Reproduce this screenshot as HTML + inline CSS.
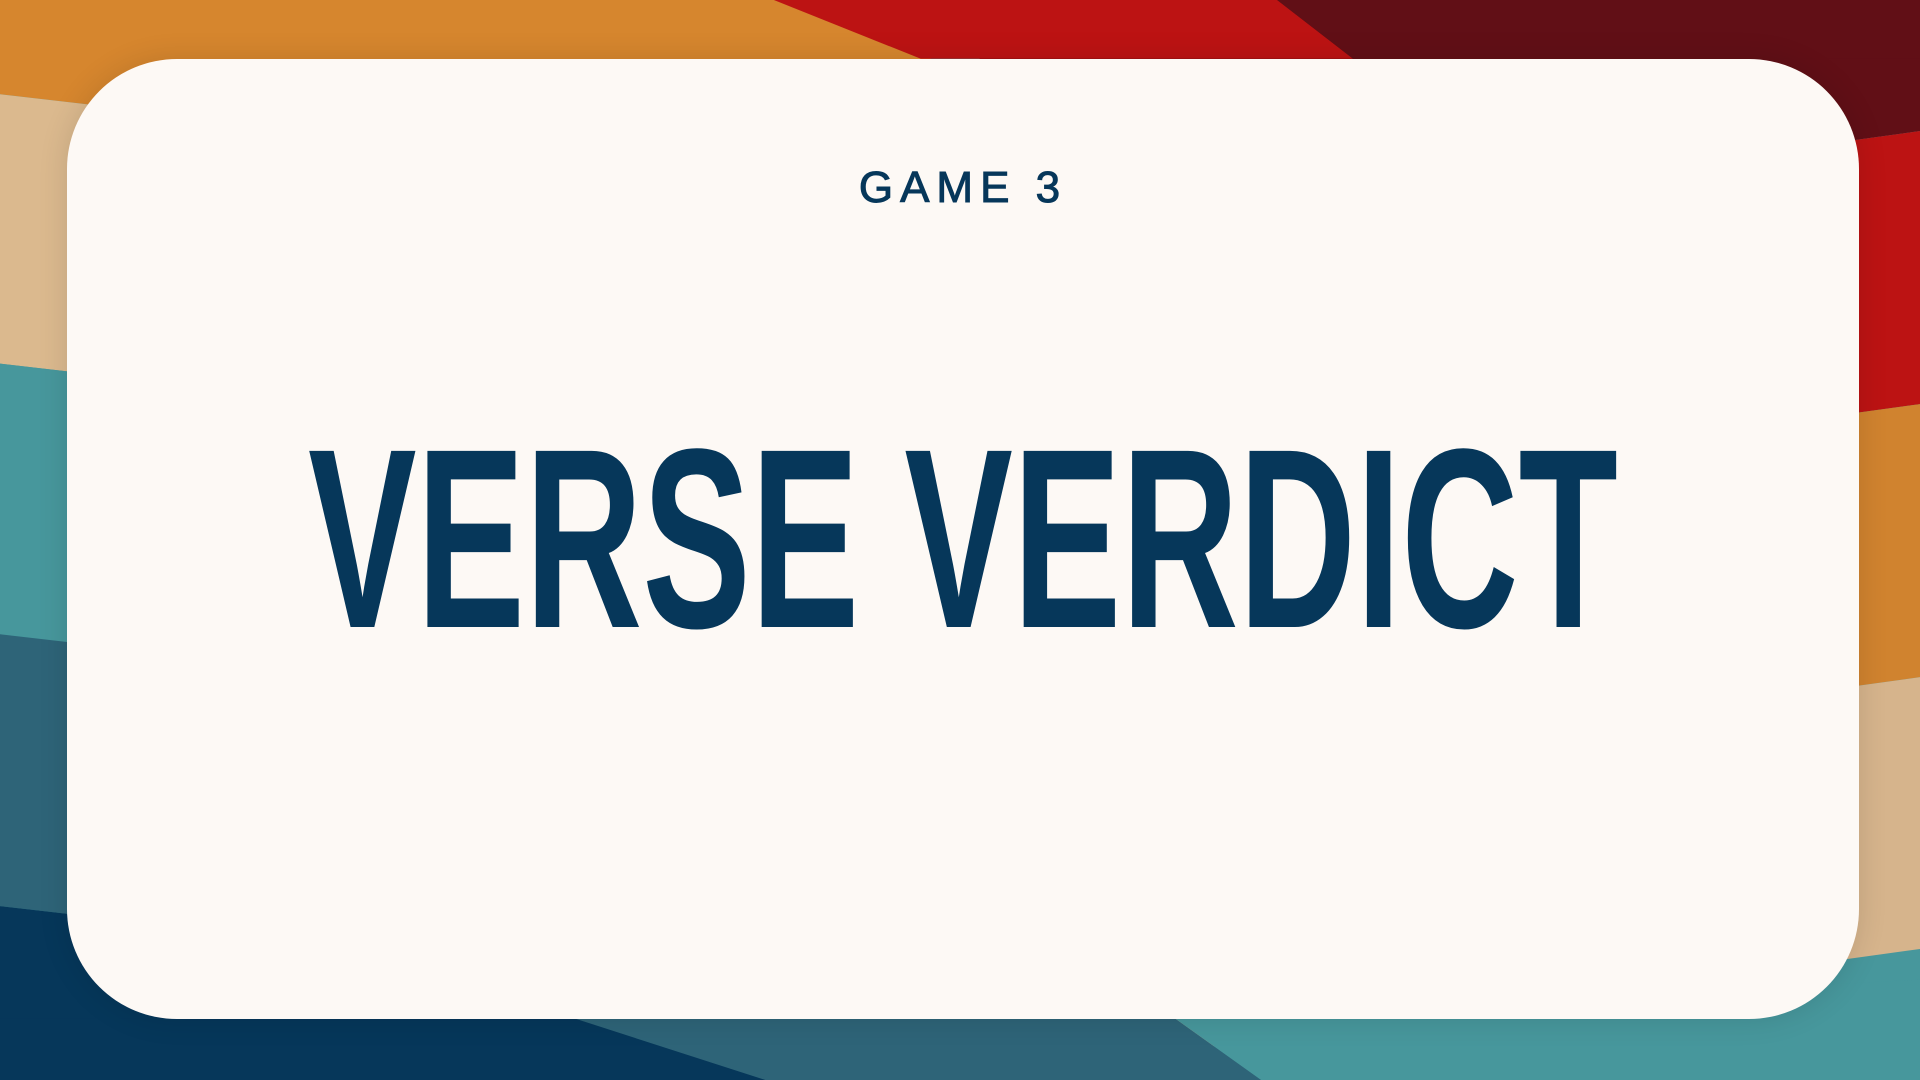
<!DOCTYPE html>
<html><head><meta charset="utf-8"><style>
html,body{margin:0;padding:0;width:1920px;height:1080px;overflow:hidden;background:#47979c}
svg.bg{position:absolute;left:0;top:0}
.card{position:absolute;left:67px;top:59px;width:1792px;height:960px;background:#fdf9f5;border-radius:110px;box-shadow:0 0 30px rgba(0,0,0,.12)}
.game{position:absolute;left:0;right:0;top:104px;text-align:center;font:44px "Liberation Sans",sans-serif;letter-spacing:7px;color:#06375a;-webkit-text-stroke:1px #06375a}
.title{position:absolute;left:50%;top:352px;font:bold 256px/1 "Liberation Sans",sans-serif;color:#06375a;transform:translateX(-50%) scaleX(0.635);white-space:nowrap}
</style></head><body>
<svg class="bg" width="1920" height="1080" viewBox="0 0 1568 882" preserveAspectRatio="none">
<polygon points="0,0 760,0 760,164 0,77" fill="#d6862e"/>
<polygon points="0,77 760,164 760,384 0,297" fill="#dbb98e"/>
<polygon points="0,297 760,384 760,605 0,518" fill="#47979c"/>
<polygon points="0,518 760,605 760,827 0,740" fill="#2e6478"/>
<polygon points="0,740 760,827 760,882 0,882" fill="#06375a"/>
<polygon points="800,0 1568,0 1568,107 800,213" fill="#610f16"/>
<polygon points="800,213 1568,107 1568,330 800,436" fill="#bc1313"/>
<polygon points="800,436 1568,330 1568,553 800,659" fill="#d0832f"/>
<polygon points="800,659 1568,553 1568,775 800,881" fill="#d6b48c"/>
<polygon points="632,0 1043,0 1105,48 752,48" fill="#bc1313"/>
<polygon points="1043,0 1568,0 1568,48 1105,48" fill="#610f16"/>
<polygon points="0,832 470,832 625,882 0,882" fill="#06375a"/>
<polygon points="470,832 960,832 1030,882 625,882" fill="#2e6478"/>
<polygon points="960,832 1568,800 1568,882 1030,882" fill="#47979c"/>
</svg>
<div class="card">
<div class="game">GAME 3</div>
<div class="title">VERSE VERDICT</div>
</div>
</body></html>
